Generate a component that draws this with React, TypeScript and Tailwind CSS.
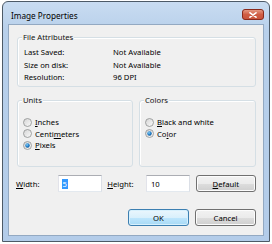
import React from "react";

const font = { fontFamily: '"Noto Sans", "Open Sans", sans-serif' };

function Radio({ checked }: { checked?: boolean }) {
  return (
    <svg width="9" height="9" viewBox="0 0 9 9" className="shrink-0">
      <defs>
        <linearGradient id="rg" x1="0" y1="0" x2="1" y2="1">
          <stop offset="0" stopColor="#d4d4d4" />
          <stop offset="1" stopColor="#fbfbfb" />
        </linearGradient>
        <radialGradient id="dot" cx="0.4" cy="0.35" r="0.7">
          <stop offset="0" stopColor="#8fd0f4" />
          <stop offset="0.5" stopColor="#2a8ad4" />
          <stop offset="1" stopColor="#0d4f8e" />
        </radialGradient>
      </defs>
      <circle cx="4.5" cy="4.5" r="4" fill="url(#rg)" stroke="#8e8f8f" strokeWidth="0.8" />
      {checked && <circle cx="4.5" cy="4.5" r="2.2" fill="url(#dot)" />}
    </svg>
  );
}

function Group({
  title,
  className,
  children,
}: {
  title: string;
  className?: string;
  children?: React.ReactNode;
}) {
  return (
    <div
      className={
        "relative rounded-[3px] border border-[#d5dfe5] shadow-[inset_1px_1px_0_#ffffff] " +
        (className || "")
      }
    >
      <div className="absolute left-[4px] top-[-6px] bg-[#f0f0f0] px-px text-[7.7px] leading-[10px] text-[#111]">
        {title}
      </div>
      {children}
    </div>
  );
}

function Btn({
  children,
  isDefault,
  className,
}: {
  children: React.ReactNode;
  isDefault?: boolean;
  className?: string;
}) {
  return (
    <div
      className={
        "flex h-[17px] w-[61px] items-center justify-center rounded-[3px] border text-[7.7px] " +
        (isDefault
          ? "border-[#3c7fb1] bg-[linear-gradient(#eaf6fd_0%,#d9f0fc_50%,#bee6fd_51%,#a7d9f5_100%)] shadow-[inset_0_0_0_1px_#d6f0fd]"
          : "border-[#707070] bg-[linear-gradient(#f2f2f2_0%,#ebebeb_50%,#dddddd_51%,#cfcfcf_100%)] shadow-[inset_0_0_0_1px_#fcfcfc]") +
        " " +
        (className || "")
      }
    >
      {children}
    </div>
  );
}

export default function App() {
  return (
    <div className="h-[244px] w-[272px] bg-white pl-[2px] pt-[1px]" style={font}>
      <div className="flex h-[241px] w-[268px] flex-col rounded-t-[6px] border border-[#4d5a67] bg-[linear-gradient(#c9dcf1_0%,#b8d0eb_12%,#b3cce9_100%)] px-[5px] pb-[5px]">
        {/* Title bar */}
        <div className="flex h-[22px] shrink-0 items-start justify-between">
          <div className="ml-[3px] mt-[8px] text-[8.2px] leading-[11px] text-black">Image Properties</div>
          <div className="mt-[7px] flex h-[11px] w-[22px] items-center justify-center rounded-[3px] border border-[#8a2a1c] bg-[#c9543c] bg-linear-to-b from-[#e59882] via-[#cf5d44] to-[#c9543c]">
            <svg width="8" height="6" viewBox="0 0 8 6">
              <path d="M1 0.8 L7 5.2 M7 0.8 L1 5.2" stroke="#ffffff" strokeWidth="1.6" strokeLinecap="round" />
            </svg>
          </div>
        </div>
        {/* Client */}
        <div className="flex h-[212px] w-[256px] flex-col border border-[#93a9c2] bg-[#f0f0f0] pl-[8px] pr-[7px] pt-[12px] text-[7.7px] leading-[10px] text-black">
          <Group title="File Attributes" className="h-[50px] w-[239px]">
            <div className="flex flex-col gap-[2.5px] pl-[6px] pt-[9px]">
              <div className="flex">
                <span className="w-[89px]">Last Saved:</span>
                <span>Not Available</span>
              </div>
              <div className="flex">
                <span className="w-[89px]">Size on disk:</span>
                <span>Not Available</span>
              </div>
              <div className="flex">
                <span className="w-[89px]">Resolution:</span>
                <span>96 DPI</span>
              </div>
            </div>
          </Group>
          <div className="mt-[13px] flex gap-[6px]">
            <Group title="Units" className="h-[67px] w-[116px]">
              <div className="flex flex-col gap-[1.5px] pl-[5px] pt-[16px]">
                <div className="flex items-center gap-[3px]">
                  <Radio />
                  <span>
                    <u>I</u>nches
                  </span>
                </div>
                <div className="flex items-center gap-[3px]">
                  <Radio />
                  <span>
                    Centi<u>m</u>eters
                  </span>
                </div>
                <div className="flex items-center gap-[3px]">
                  <Radio checked />
                  <span>
                    <u>P</u>ixels
                  </span>
                </div>
              </div>
            </Group>
            <Group title="Colors" className="h-[67px] w-[117px]">
              <div className="flex flex-col gap-[1.5px] pl-[5px] pt-[16px]">
                <div className="flex items-center gap-[3px]">
                  <Radio />
                  <span>
                    <u>B</u>lack and white
                  </span>
                </div>
                <div className="flex items-center gap-[3px]">
                  <Radio checked />
                  <span>
                    Co<u>l</u>or
                  </span>
                </div>
              </div>
            </Group>
          </div>
          {/* Width / Height row */}
          <div className="-ml-px mt-[8px] flex h-[17px] items-center">
            <span className="w-[42px]">
              <u>W</u>idth:
            </span>
            <div className="flex h-[17px] w-[45px] items-center border border-[#abadb3] border-b-[#e3e9ef] border-l-[#e2e3ea] border-r-[#dbdfe6] bg-white pl-[3px]">
              <span className="bg-[#3399ff] px-px text-white">5</span>
            </div>
            <span className="ml-[5px] w-[39px]">
              <u>H</u>eight:
            </span>
            <div className="flex h-[17px] w-[44px] items-center border border-[#abadb3] border-b-[#e3e9ef] border-l-[#e2e3ea] border-r-[#dbdfe6] bg-white pl-[4px]">
              10
            </div>
            <Btn className="ml-[6px]">
              <span>
                <u>D</u>efault
              </span>
            </Btn>
          </div>
          {/* OK / Cancel */}
          <div className="mt-[17px] flex justify-end gap-[6px]">
            <Btn isDefault>OK</Btn>
            <Btn>Cancel</Btn>
          </div>
        </div>
      </div>
    </div>
  );
}
